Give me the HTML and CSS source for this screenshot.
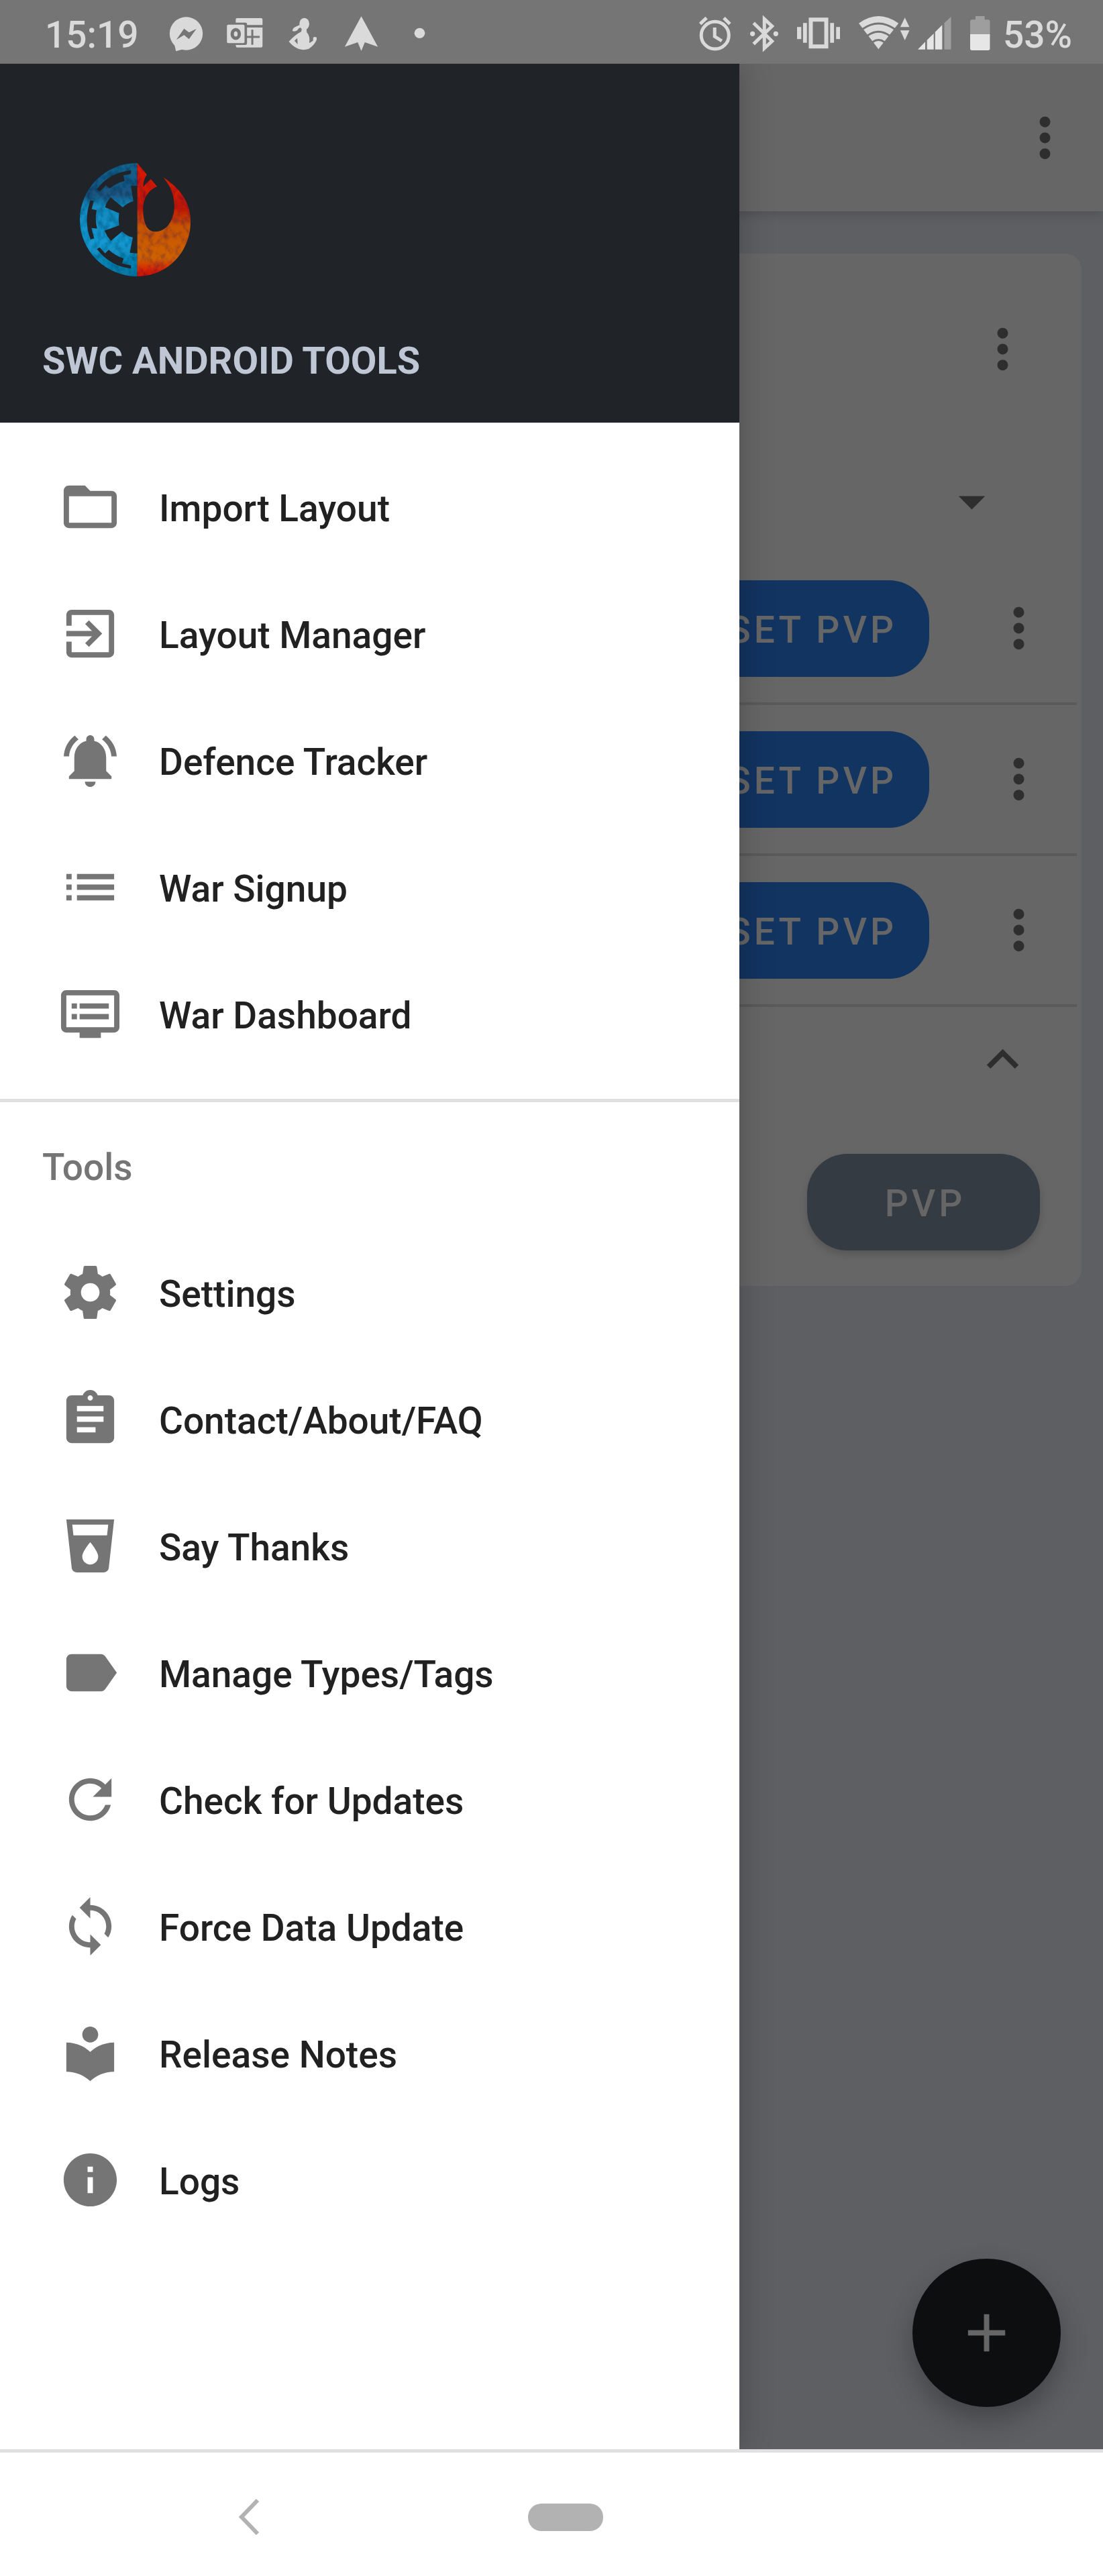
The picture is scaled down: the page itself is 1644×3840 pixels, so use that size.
FILE: index.html
```html
<!DOCTYPE html>
<html lang="en">
<head>
<meta charset="utf-8">
<meta name="viewport" content="width=device-width, initial-scale=1">
<title>SWC Android Tools</title>
<link rel="stylesheet" href="styles.css">
</head>
<body>
<svg class="defs" width="0" height="0" aria-hidden="true">
  <symbol id="more" viewBox="0 0 24 24"><path d="M12 8c1.1 0 2-.9 2-2s-.9-2-2-2-2 .9-2 2 .9 2 2 2zm0 2c-1.1 0-2 .9-2 2s.9 2 2 2 2-.9 2-2-.9-2-2-2zm0 6c-1.1 0-2 .9-2 2s.9 2 2 2 2-.9 2-2-.9-2-2-2z"/></symbol>
</svg>

<header class="status">
  <div class="status-left">
    <span class="status-text">15:19</span>
    <div class="notifications">
      <svg class="note" viewBox="469 0 120 285" preserveAspectRatio="none"><ellipse cx="529" cy="150" rx="47" ry="74"/><path d="M495 195L500 229L523 219Z"/><path class="cut" d="M501 178L523 128L537 145L558 129L537 175L523 157Z"/></svg>
      <svg class="note" viewBox="635 0 120 285" preserveAspectRatio="none"><path d="M674 81H742Q746 81 746 87V112H702V107Q702 101 697 101H670V87Q670 81 674 81Z"/><path d="M649 110H691Q695 110 695 116V187Q695 193 691 193H649Q645 193 645 187V116Q645 110 649 110Z"/><path d="M702 123H746V206Q746 212 742 212H674Q670 212 670 201H697Q702 201 702 193Z"/><ellipse class="cut-line" cx="670" cy="152" rx="10" ry="19"/><path class="cut-thin" d="M717 133V200M701 165H738"/></svg>
      <svg class="note" viewBox="802 0 120 285" preserveAspectRatio="none"><ellipse cx="866" cy="107" rx="14" ry="27"/><path fill-rule="evenodd" d="M859 128L857 142Q840 155 822 186Q835 210 850 219Q864 226 878 219Q895 202 901 178L901 168Q896 162 891 168V182L880 193Q883 160 873 145L872 128ZM846 170L838 182L847 198Z"/><path d="M832 138Q833 124 842 119L852 112L857 122Q848 126 846 136Q838 143 832 138Z"/></svg>
      <svg class="note" viewBox="967 0 120 285" preserveAspectRatio="none"><path d="M1027 73L1074 209L1037 189L1027 228L1017 189L980 209Z"/></svg>
      <svg class="note" viewBox="1133 0 120 285" preserveAspectRatio="none"><ellipse cx="1193" cy="148" rx="15" ry="23"/></svg>
    </div>
  </div>
  <div class="status-right">
    <svg class="w48" viewBox="417 0 91 285" preserveAspectRatio="none"><ellipse class="line" cx="462" cy="158" rx="39" ry="61"/><path class="line" d="M461 123V163L481 183M420 107L438 80M504 107L487 80"/></svg>
    <svg class="w42" viewBox="567 0 81 285" preserveAspectRatio="none"><ellipse cx="574" cy="151" rx="7" ry="11"/><ellipse cx="641" cy="151" rx="7" ry="11"/><path class="line" d="M577 103L630 184L608 216V85L630 117L577 197"/></svg>
    <svg class="w64" viewBox="700 0 122 285" preserveAspectRatio="none"><rect class="line thick" x="739" y="88" width="44" height="120"/><path d="M700 121h12v54h-12zM717 103h11v88h-11zM794 103h11v88h-11zM811 121h11v54h-11z"/></svg>
    <div class="signal">
      <svg class="w76" viewBox="875 0 145 285" preserveAspectRatio="none"><path d="M931 220L875 104Q931 40 988 104Z"/><path class="cut-thin" d="M886 130Q931 80 977 130M900 159Q931 124 962 159M914 188Q931 169 948 188"/><path d="M993 121L1006 79L1019 121ZM993 136H1019L1006 180Z"/></svg>
      <svg class="w50" viewBox="1041 0 95 285" preserveAspectRatio="none"><path class="dim" d="M1116 103L1135 75V221H1116Z"/><path class="bright" d="M1041 221L1062 187V221ZM1067 179L1086 150V221H1067ZM1090 143L1110 112V221H1090Z"/></svg>
    </div>
    <div class="battery">
      <svg class="w30" viewBox="1192 0 57 285" preserveAspectRatio="none"><path class="dim" d="M1207 72h26v16h10q5 0 5 8V153H1192V96q0-8 5-8h10Z"/><path class="bright" d="M1192 153H1248V217q0 8-5 8H1197q-5 0-5-8Z"/></svg>
      <span class="status-text">53%</span>
    </div>
  </div>
</header>

<div class="stage">
  <main class="app">
    <div class="appbar">
      <button class="icon-button" aria-label="More options"><svg class="icon"><use href="#more"/></svg></button>
    </div>
    <section class="card">
      <div class="card-head">
        <button class="icon-button" aria-label="Card options"><svg class="icon"><use href="#more"/></svg></button>
      </div>
      <div class="card-select">
        <button class="icon-button" aria-label="Choose"><svg class="icon" viewBox="0 0 24 24"><path d="M7 10l5 5 5-5z"/></svg></button>
      </div>
      <ul class="layouts">
        <li><button class="pill blue">SET PVP</button><button class="icon-button" aria-label="Layout options"><svg class="icon"><use href="#more"/></svg></button></li>
        <li><button class="pill blue">SET PVP</button><button class="icon-button" aria-label="Layout options"><svg class="icon"><use href="#more"/></svg></button></li>
        <li><button class="pill blue">SET PVP</button><button class="icon-button" aria-label="Layout options"><svg class="icon"><use href="#more"/></svg></button></li>
      </ul>
      <div class="card-collapse">
        <button class="icon-button" aria-label="Collapse"><svg class="icon" viewBox="0 0 24 24"><path d="M12 8l-6 6 1.41 1.41L12 10.83l4.59 4.58L18 14z"/></svg></button>
      </div>
      <div class="card-actions"><button class="pill slate">PVP</button></div>
    </section>
  </main>

  <button class="fab" aria-label="Add"><svg class="icon" viewBox="0 0 24 24"><path d="M19 13h-6v6h-2v-6H5v-2h6V5h2v6h6v2z"/></svg></button>

  <aside class="drawer">
    <div class="drawer-head">
      <svg class="logo" viewBox="194 128 403 507" preserveAspectRatio="none" role="img" aria-label="SWC logo">
        <defs>
          <linearGradient id="blue" x1="0" y1="0" x2="0" y2="1"><stop offset="0" stop-color="#12638c"/><stop offset=".12" stop-color="#175a86"/><stop offset=".28" stop-color="#1b547f"/><stop offset=".38" stop-color="#1688bd"/><stop offset=".7" stop-color="#1598d0"/><stop offset="1" stop-color="#0c739f"/></linearGradient>
          <linearGradient id="red" x1="0" y1="0" x2="0" y2="1"><stop offset="0" stop-color="#dc1c00"/><stop offset=".4" stop-color="#c21c00"/><stop offset=".56" stop-color="#c65400"/><stop offset=".84" stop-color="#cf6200"/><stop offset=".95" stop-color="#d42200"/><stop offset="1" stop-color="#c81800"/></linearGradient>
          <filter id="grain" x="0" y="0" width="1" height="1"><feTurbulence type="fractalNoise" baseFrequency=".05 .03" numOctaves="4" seed="7"/><feColorMatrix values="0 0 0 0 0  0 0 0 0 0  0 0 0 0 .02  1.2 0 0 0 -.5"/><feComposite in2="SourceGraphic" operator="in" result="n"/><feMerge><feMergeNode in="SourceGraphic"/><feMergeNode in="n"/></feMerge></filter>
        </defs>
        <path fill="url(#blue)" filter="url(#grain)" d="M403 128A209 253.500 0 0 0 403 635Z"/>
        <path fill="url(#red)" filter="url(#grain)" d="M403 128L438 180Q424 205 425 236Q438 212 453 201L475 233Q423 262 424 340Q427 435 468 435Q520 433 536 350Q547 262 497 192Q597 270 597 390C597 530 510 635 403 635Z"/>
        <g fill="#202328">
          <path d="M404 230H380L389 299Q368 305 350 326L306 282Q292 300 286 326L337 352Q333 380 337 407L284 430Q292 455 307 476L348 434Q365 455 387 461L376 529L403 532V230Z"/>
          <path d="M256 245Q300 172 380 161V177L353 183L357 208Q325 218 302 242L289 228L266 256Z"/>
          <path d="M232 295L245 297L237 334L255 339Q248 380 257 421L236 418L246 465L233 470Q207 385 232 295Z"/>
          <path d="M266 505L286 532L299 516Q325 545 353 555L348 577L380 586V600Q305 590 256 513Z"/>
        </g>
      </svg>
      <h1 class="drawer-title">SWC ANDROID TOOLS</h1>
    </div>
    <nav class="menu">
      <a class="item" href="#import"><svg class="icon" viewBox="0 0 24 24"><path d="M20 6h-8l-2-2H4c-1.1 0-1.990.9-1.990 2L2 18c0 1.100.9 2 2 2h16c1.100 0 2-.9 2-2V8c0-1.100-.9-2-2-2zm0 12H4V8h16v10z"/></svg><span>Import Layout</span></a>
      <a class="item" href="#layouts"><svg class="icon" viewBox="0 0 24 24"><path d="M10.090 15.590L11.500 17l5-5-5-5-1.410 1.410L12.670 11H3v2h9.670l-2.580 2.590zM19 3H5c-1.110 0-2 .9-2 2v4h2V5h14v14H5v-4H3v4c0 1.100.89 2 2 2h14c1.100 0 2-.9 2-2V5c0-1.100-.9-2-2-2z"/></svg><span>Layout Manager</span></a>
      <a class="item" href="#defence"><svg class="icon" viewBox="0 0 24 24"><path d="M7.580 4.080L6.150 2.650C3.750 4.480 2.170 7.300 2.030 10.500h2c.15-2.650 1.510-4.970 3.550-6.420zm12.390 6.420h2c-.15-3.200-1.730-6.020-4.120-7.850l-1.420 1.430c2.020 1.450 3.390 3.770 3.540 6.420zM18 11c0-3.070-1.640-5.640-4.500-6.320V4c0-.83-.67-1.500-1.500-1.500s-1.500.67-1.500 1.500v.68C7.630 5.360 6 7.920 6 11v5l-2 2v1h16v-1l-2-2v-5zm-6 11c.14 0 .27-.01.4-.04.65-.14 1.180-.58 1.440-1.180.1-.24.15-.5.15-.78h-4c.01 1.100.9 2 2.010 2z"/></svg><span>Defence Tracker</span></a>
      <a class="item" href="#signup"><svg class="icon" viewBox="0 0 24 24"><path d="M3 13h2v-2H3v2zm0 4h2v-2H3v2zm0-8h2V7H3v2zm4 4h14v-2H7v2zm0 4h14v-2H7v2zM7 7v2h14V7H7z"/></svg><span>War Signup</span></a>
      <a class="item" href="#dashboard"><svg class="icon" viewBox="0 0 24 24"><path d="M21 3H3c-1.100 0-2 .9-2 2v12c0 1.100.9 2 2 2h5v2h8v-2h5c1.100 0 1.990-.9 1.990-2L23 5c0-1.100-.9-2-2-2zm0 14H3V5h18v12zm-2-9H8v2h11V8zm0 4H8v2h11v-2zM7 8H5v2h2V8zm0 4H5v2h2v-2z"/></svg><span>War Dashboard</span></a>
    </nav>
    <nav class="menu tools" aria-labelledby="tools-title">
      <h2 class="section-title" id="tools-title"><span>Tools</span></h2>
      <a class="item" href="#settings"><svg class="icon" viewBox="0 0 24 24"><path d="M19.430 12.980c.04-.32.07-.64.07-.98s-.03-.66-.07-.98l2.110-1.650c.19-.15.24-.42.12-.64l-2-3.460c-.12-.22-.39-.3-.61-.22l-2.490 1c-.52-.4-1.080-.73-1.690-.98l-.38-2.650C14.460 2.180 14.250 2 14 2h-4c-.25 0-.46.18-.49.42l-.38 2.650c-.61.25-1.170.59-1.690.98l-2.490-1c-.23-.09-.49 0-.61.22l-2 3.460c-.13.22-.07.49.12.64l2.110 1.650c-.04.32-.07.65-.07.98s.03.66.07.98l-2.110 1.650c-.19.15-.24.42-.12.64l2 3.460c.12.22.39.3.61.22l2.490-1c.52.4 1.080.73 1.690.98l.38 2.650c.03.24.24.42.49.42h4c.25 0 .46-.18.49-.42l.38-2.650c.61-.25 1.170-.59 1.690-.98l2.490 1c.23.09.49 0 .61-.22l2-3.460c.12-.22.07-.49-.12-.64l-2.110-1.650zM12 15.500c-1.930 0-3.500-1.570-3.500-3.500s1.570-3.500 3.500-3.500 3.500 1.570 3.500 3.500-1.570 3.500-3.500 3.500z"/></svg><span>Settings</span></a>
      <a class="item" href="#about"><svg class="icon" viewBox="0 0 24 24"><path d="M19 3h-4.180C14.400 1.840 13.300 1 12 1c-1.300 0-2.400.84-2.820 2H5c-1.100 0-2 .9-2 2v14c0 1.100.9 2 2 2h14c1.100 0 2-.9 2-2V5c0-1.100-.9-2-2-2zm-7 0c.55 0 1 .45 1 1s-.45 1-1 1-1-.45-1-1 .45-1 1-1zm2 14H7v-2h7v2zm3-4H7v-2h10v2zm0-4H7V7h10v2z"/></svg><span>Contact/About/FAQ</span></a>
      <a class="item" href="#thanks"><svg class="icon" viewBox="0 0 24 24"><path d="M3 2l2.010 18.230C5.130 21.230 5.970 22 7 22h10c1.030 0 1.870-.77 1.990-1.770L21 2H3zm9 17c-1.660 0-3-1.340-3-3 0-2 3-5.400 3-5.400s3 3.400 3 5.400c0 1.660-1.340 3-3 3zm6.330-11H5.670l-.44-4h13.550l-.45 4z"/></svg><span>Say Thanks</span></a>
      <a class="item" href="#tags"><svg class="icon" viewBox="0 0 24 24"><path d="M17.630 5.840C17.270 5.330 16.670 5 16 5L5 5.010C3.900 5.010 3 5.900 3 7v10c0 1.100.9 1.990 2 1.990L16 19c.67 0 1.270-.33 1.630-.84L22 12l-4.370-6.160z"/></svg><span>Manage Types/Tags</span></a>
      <a class="item" href="#updates"><svg class="icon" viewBox="0 0 24 24"><path d="M17.650 6.350C16.200 4.900 14.210 4 12 4c-4.420 0-7.990 3.580-7.990 8s3.570 8 7.990 8c3.730 0 6.840-2.550 7.730-6h-2.080c-.82 2.330-3.040 4-5.650 4-3.310 0-6-2.690-6-6s2.690-6 6-6c1.660 0 3.140.69 4.220 1.780L13 11h7V4l-2.350 2.350z"/></svg><span>Check for Updates</span></a>
      <a class="item" href="#data"><svg class="icon" viewBox="0 0 24 24"><path d="M12 4V1L8 5l4 4V6c3.310 0 6 2.690 6 6 0 1.010-.25 1.970-.7 2.800l1.460 1.460C19.540 15.030 20 13.570 20 12c0-4.420-3.580-8-8-8zm0 14c-3.310 0-6-2.690-6-6 0-1.010.25-1.970.7-2.800L5.240 7.740C4.460 8.970 4 10.430 4 12c0 4.420 3.580 8 8 8v3l4-4-4-4v3z"/></svg><span>Force Data Update</span></a>
      <a class="item" href="#notes"><svg class="icon" viewBox="0 0 24 24"><path d="M12 11.550C9.640 9.350 6.480 8 3 8v11c3.480 0 6.640 1.350 9 3.550 2.360-2.190 5.520-3.550 9-3.550V8c-3.480 0-6.640 1.350-9 3.550zM12 8c1.660 0 3-1.340 3-3s-1.340-3-3-3-3 1.340-3 3 1.340 3 3 3z"/></svg><span>Release Notes</span></a>
      <a class="item" href="#logs"><svg class="icon" viewBox="0 0 24 24"><path d="M12 2C6.480 2 2 6.480 2 12s4.480 10 10 10 10-4.480 10-10S17.520 2 12 2zm1 15h-2v-6h2v6zm0-8h-2V7h2v2z"/></svg><span>Logs</span></a>
    </nav>
  </aside>
</div>

<footer class="navbar">
  <button class="nav-back" aria-label="Back"><svg width="32" height="56" viewBox="0 0 32 56"><path d="M28 3L4 28L28 53" fill="none" stroke="#b2b2b2" stroke-width="6"/></svg></button>
  <button class="nav-home" aria-label="Home"></button>
</footer>
</body>
</html>
```
FILE: styles.css
```css
* { box-sizing: border-box; }

body {
  margin: 0;
  min-height: 100vh;
  display: flex;
  flex-direction: column;
  background: #fff;
  color: #212121;
  font-family: Roboto, "Liberation Sans", sans-serif;
  font-size: 55px;
  line-height: 66px;
  font-weight: 500;
}

button {
  margin: 0;
  padding: 0;
  border: 0;
  background: none;
  color: inherit;
  font: inherit;
}

svg { display: block; flex: none; }
.defs { position: absolute; }

/* Status bar */
.status {
  display: flex;
  justify-content: space-between;
  align-items: center;
  height: 95px;
  padding: 0 46px 0 67px;
  background: #757575;
  color: #dadada;
  fill: #dadada;
}
.status svg { height: 95px; }
.status-left, .status-right, .notifications, .signal, .battery {
  display: flex;
  align-items: center;
}
.status-left { gap: 39px; }
.status-text { padding-top: 8px; }
.notifications { gap: 24px; }
.note { width: 63px; }
.status-right { gap: 28px; }
.signal { gap: 12px; }
.battery { gap: 19px; }
.w30 { width: 30px; }
.w42 { width: 42px; }
.w48 { width: 48px; }
.w50 { width: 50px; }
.w64 { width: 64px; }
.w76 { width: 76px; }
.cut { fill: #757575; }
.cut-line, .cut-thin {
  fill: none;
  stroke: #757575;
  stroke-width: 5px;
  vector-effect: non-scaling-stroke;
}
.cut-thin { stroke-width: 3px; }
.line {
  fill: none;
  stroke: #dadada;
  stroke-width: 5px;
  vector-effect: non-scaling-stroke;
}
.thick { stroke-width: 6px; }
.dim { fill: #9e9e9e; }
.bright { fill: #e6e6e6; }

/* The app, the floating button and the drawer share one grid cell */
.stage {
  flex: 1;
  display: grid;
  grid-template: 1fr / 1fr;
  overflow: hidden;
}
.app, .fab, .drawer { grid-area: 1 / 1; }

.icon { width: 95px; height: 95px; fill: currentColor; }
.icon-button { flex: none; color: #2e2e2e; }

/* Dimmed app behind the drawer */
.app { background: #5e5f63; }
.appbar {
  display: flex;
  align-items: center;
  justify-content: flex-end;
  height: 220px;
  padding-right: 39px;
  background: #666;
  box-shadow: 0 4px 16px rgba(0, 0, 0, .16);
}
.card {
  margin: 63px 32px 0;
  background: #666;
  border-radius: 24px;
}
.card-head, .card-select, .card-collapse, .card-actions {
  display: flex;
  justify-content: flex-end;
}
.card-head { padding: 95px 70px 0; }
.card-select { padding: 132px 116px 31px; }
.layouts {
  margin: 0 7px;
  padding: 0;
  list-style: none;
}
.layouts li {
  display: flex;
  align-items: center;
  justify-content: flex-end;
  gap: 86px;
  height: 225px;
  padding-right: 39px;
  border-bottom: 4px solid #5a5a5a;
}
.card-collapse { padding: 31px 70px 0; }
.card-actions { padding: 93px 62px 53px; }
.pill {
  height: 144px;
  padding: 4px 48px 0;
  border-radius: 60px;
  color: #666;
  letter-spacing: 5px;
}
.blue { background: #123461; }
.slate {
  width: 347px;
  padding: 4px 0 0 5px;
  background: #353b43;
  box-shadow: 0 6px 12px rgba(0, 0, 0, .16);
}

.fab {
  place-self: end;
  display: grid;
  place-items: center;
  width: 221px;
  height: 221px;
  margin: 63px;
  border-radius: 50%;
  background: #0d0e10;
  color: #666;
  box-shadow: 0 20px 40px rgba(0, 0, 0, .28);
}

/* Drawer */
.drawer {
  z-index: 1;
  width: 67.05%;
  background: #fff;
  box-shadow: 0 0 48px rgba(0, 0, 0, .24);
}
.drawer-head {
  display: flex;
  flex-direction: column;
  gap: 93px;
  padding: 148px 63px 59px;
  background: #202328;
}
.logo { width: 165px; height: 169px; margin-left: 56px; }
.drawer-title {
  margin: 0;
  color: #bfc7d5;
  font-size: 56px;
  line-height: 66px;
  font-weight: 700;
}
.menu { padding: 31px 0 32px; }
.tools { padding-top: 0; border-top: 5px solid #e0e0e0; }
.item, .section-title {
  display: flex;
  align-items: center;
  height: 189px;
}
.item {
  gap: 55px;
  padding-left: 87px;
  color: inherit;
  text-decoration: none;
}
.item .icon { fill: #757575; }
.item span, .section-title span { padding-top: 4px; }
.section-title {
  margin: 0;
  padding-left: 63px;
  color: #757575;
  font-size: 55px;
  font-weight: 500;
}

/* System navigation */
.navbar {
  display: flex;
  align-items: center;
  gap: 31%;
  height: 189px;
  padding: 8px 0 0 356px;
  border-top: 5px solid #e0e0e0;
  background: #fff;
}
.nav-home {
  width: 112px;
  height: 41px;
  border-radius: 20px;
  background: #b2b2b2;
}
```
